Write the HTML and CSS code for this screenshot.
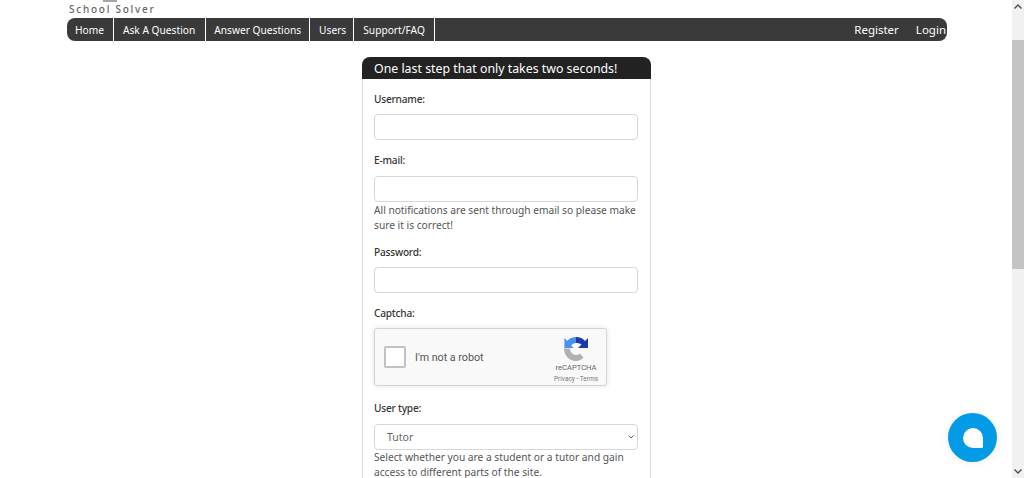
FILE: index.html
```html
<!DOCTYPE html>
<html lang="en">
<head>
    <meta charset="UTF-8">
    <title>School Solver - Register</title>
    <link rel="stylesheet" href="styles.css">
</head>
<body>

    <div class="page">
        <div class="logo">
            <span class="logo-mark"></span>
            <span class="logo-text">School Solver</span>
        </div>

        <nav class="navbar">
            <a class="nav-link nav-home">Home</a>
            <a class="nav-link nav-ask">Ask A Question</a>
            <a class="nav-link nav-answer">Answer Questions</a>
            <a class="nav-link nav-users">Users</a>
            <a class="nav-link">Support/FAQ</a>
            <div class="nav-right">
                <a>Register</a>
                <a>Login</a>
            </div>
        </nav>

        <div class="card">
            <h1 class="card-title">One last step that only takes two seconds!</h1>
            <form class="card-body">
                <label class="field-label" for="username">Username:</label>
                <input class="field" type="text" id="username">

                <label class="field-label email-label" for="email">E-mail:</label>
                <input class="field" type="text" id="email">
                <p class="hint">All notifications are sent through email so please make sure it is correct!</p>

                <label class="field-label password-label" for="password">Password:</label>
                <input class="field" type="text" id="password">

                <div class="field-label captcha-label">Captcha:</div>
                <div class="captcha">
                    <span class="captcha-box"></span>
                    <span class="captcha-text">I'm not a robot</span>
                    <div class="captcha-brand">
                        <svg class="captcha-logo" viewBox="0 0 24 24" width="24" height="24">
                            <path fill="#b0b0b0" d="M0 11.500H6C6 15 8.700 18 12 18C13.500 18 15 17.500 16 16.500L19.500 20.500C17.500 22.800 15 24 12 24C5.400 24 0 18.600 0 11.500Z"/>
                            <path fill="#4a90f0" d="M12 0V6C10 6 8.200 7 7.200 8.800L10 11H0.400V1L3.200 3.800C5.400 1.400 8.500 0 12 0Z"/>
                            <path fill="#1c3aa9" d="M12 0C16 0 19 1.500 21 4L24 1V11H14L17.500 7.500C16.200 6.500 14.200 6 12 6Z"/>
                        </svg>
                        <span class="captcha-name">reCAPTCHA</span>
                        <span class="captcha-links">Privacy - Terms</span>
                    </div>
                </div>

                <label class="field-label type-label" for="usertype">User type:</label>
                <select class="field select" id="usertype">
                    <option>Tutor</option>
                </select>
                <p class="hint hint-last">Select whether you are a student or a tutor and gain access to different parts of the site.</p>
            </form>
        </div>
    </div>

    <!-- chat button -->
    <div class="chat-button">
        <svg viewBox="0 0 20 20" width="20" height="20">
            <path fill="#fff" d="M10 0a10 10 0 1 0 0 20h8.500a1.500 1.500 0 0 0 1.500-1.500V10A10 10 0 0 0 10 0z"/>
        </svg>
    </div>

    <div class="scrollbar">
        <svg class="arrow" viewBox="0 0 8 5" width="8" height="5"><path d="M0 4l4-4 4 4-1 1-3-3-3 3z"/></svg>
        <div class="thumb"></div>
        <svg class="arrow arrow-down" viewBox="0 0 8 5" width="8" height="5"><path d="M0 1l1-1 3 3 3-3 1 1-4 4z"/></svg>
    </div>

</body>
</html>
```

FILE: styles.css
```css
html, body {
    height: 100%;
}

body {
    margin: 0;
    overflow: hidden;
    background-color: #fff;
    font-family: "Noto Sans", Arial, sans-serif;
    font-size: 10.200px;
    color: #333;
}

.page {
    width: 880px;
    margin-left: 67px;
}

.logo {
    height: 18px;
    position: relative;
}

.logo-mark {
    position: absolute;
    left: 36px;
    top: 0;
    width: 14px;
    height: 2px;
    background-color: #a5a5a5;
}

.logo-text {
    display: block;
    padding: 3px 0 0 2px;
    font-size: 10px;
    font-weight: 500;
    line-height: 13px;
    letter-spacing: 1.750px;
    color: #666;
}

.navbar {
    display: flex;
    height: 23px;
    background-color: #3a3a3a;
    border-radius: 8px;
    overflow: hidden;
    color: #fff;
}

.nav-link {
    padding: 0 9px;
    line-height: 24px;
    border-right: 1px solid #fff;
}

.nav-home { padding-left: 8px; }
.nav-ask { padding-right: 10px; }
.nav-answer { padding: 0 8px; }
.nav-users { padding-right: 7px; }

.nav-right {
    display: flex;
    gap: 17px;
    margin-left: auto;
    margin-right: 1px;
    font-size: 11.500px;
    line-height: 24px;
}

.card {
    width: 287px;
    margin: 16px 0 0 295px;
    border: 1px solid #ddd;
    border-top: none;
    border-radius: 8px 8px 0 0;
}

.card-title {
    margin: 0 -1px;
    padding-left: 12px;
    height: 22px;
    background-color: #222;
    border-radius: 8px 8px 0 0;
    color: #fff;
    font-size: 12.350px;
    font-weight: normal;
    line-height: 23px;
}

.card-body {
    padding: 12px 12px 0 11px;
}

.field-label {
    display: block;
    height: 16px;
    margin-bottom: 7px;
    font-size: 10.100px;
    font-weight: 500;
    letter-spacing: -0.200px;
    line-height: 16px;
    color: #333;
}

.email-label { margin-top: 12px; margin-bottom: 8px; }
.password-label { margin-top: 11px; }
.captcha-label { margin-top: 12px; }
.type-label { margin-top: 14px; margin-bottom: 8px; }

.field {
    display: block;
    box-sizing: border-box;
    width: 100%;
    height: 26px;
    background-color: #fff;
    border: 1px solid #d4d7da;
    border-radius: 4px;
    font-family: inherit;
    font-size: 10.500px;
    color: #666;
}

.select {
    appearance: none;
    padding-left: 12px;
    background-image: url("data:image/svg+xml,%3Csvg xmlns='http://www.w3.org/2000/svg' width='6' height='4'%3E%3Cpath d='M.5.5 3 3 5.500.5' fill='none' stroke='%23666'/%3E%3C/svg%3E");
    background-repeat: no-repeat;
    background-position: right 3px center;
}

.hint {
    margin: 0;
    padding-top: 1px;
    font-size: 10.200px;
    line-height: 15px;
    color: #555;
}

.hint-last {
    padding-top: 0;
}

.captcha {
    display: flex;
    align-items: center;
    box-sizing: border-box;
    width: 233px;
    height: 58px;
    background-color: #f9f9f9;
    border: 1px solid #d3d3d3;
    border-radius: 3px;
    box-shadow: 0 0 4px 1px rgba(0, 0, 0, 0.08);
    font-family: Roboto, Arial, sans-serif;
}

.captcha-box {
    box-sizing: border-box;
    width: 22px;
    height: 22px;
    margin-left: 9px;
    background-color: #fff;
    border: 2px solid #c1c1c1;
    border-radius: 2px;
}

.captcha-text {
    margin-left: 9px;
    font-size: 10.700px;
    color: #555;
}

.captcha-brand {
    display: flex;
    flex-direction: column;
    align-items: center;
    align-self: flex-start;
    margin: 8px 0 0 auto;
    width: 60px;
}

.captcha-name {
    margin-top: 2px;
    font-size: 7.600px;
    line-height: 10px;
    color: #666;
}

.captcha-links {
    margin-top: 2px;
    font-size: 6.500px;
    line-height: 9px;
    color: #777;
}

/* chat button */
.chat-button {
    position: fixed;
    left: 948px;
    top: 413px;
    display: flex;
    align-items: center;
    justify-content: center;
    width: 49px;
    height: 49px;
    background-color: #039be5;
    border-radius: 50%;
    box-shadow: 0 1px 8px rgba(0, 0, 0, 0.08);
}

/* fake scrollbar, the page was scrolled down */
.scrollbar {
    position: fixed;
    right: 0;
    top: 0;
    bottom: 0;
    width: 12px;
    display: flex;
    flex-direction: column;
    align-items: center;
    background-color: #f1f1f1;
}

.arrow {
    flex: none;
    margin-top: 4px;
    fill: #505050;
}

.thumb {
    width: 100%;
    height: 229px;
    margin-top: 31px;
    background-color: #c4c4c4;
}

.arrow-down {
    margin-top: auto;
    margin-bottom: 4px;
}
```
